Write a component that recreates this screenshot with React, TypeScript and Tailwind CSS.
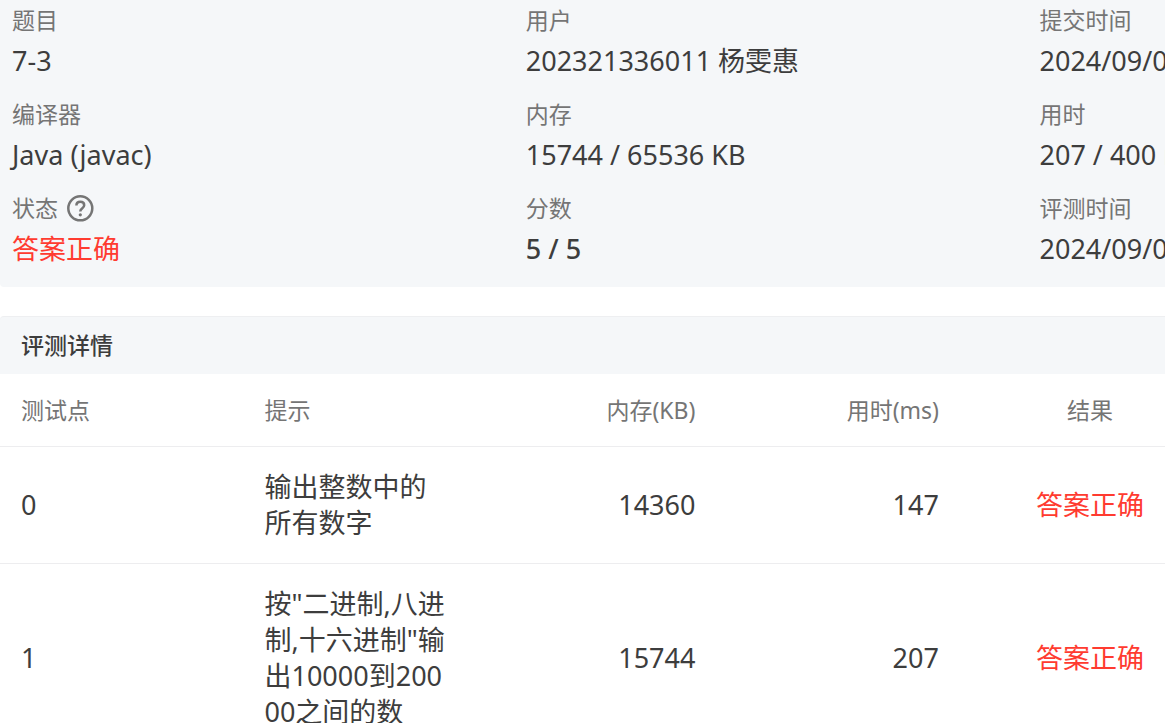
import type { ReactNode } from "react";

function HelpIcon() {
  return (
    <svg viewBox="0 0 28 28" className="size-7" fill="none" stroke="currentColor" strokeWidth="2.5" aria-hidden="true">
      <circle cx="14.3" cy="14.3" r="12" />
      <path d="M10.4 11.6C10.4 9.2 12 7.8 14.3 7.8s3.9 1.4 3.9 3.4c0 1.6-.9 2.3-2.1 3.2-1.2.9-1.8 1.5-1.8 3" />
      <circle cx="14.3" cy="20.8" r="1.6" fill="currentColor" stroke="none" />
    </svg>
  );
}

function Field({ label, help, children }: { label: string; help?: boolean; children: ReactNode }) {
  return (
    <div className="flex flex-col gap-[7px] pl-3 whitespace-nowrap">
      <dt className="flex h-8 items-center gap-2 text-[23px] leading-8 text-[#757575]">
        {label}
        {help && (
          <button type="button" aria-label="状态说明">
            <HelpIcon />
          </button>
        )}
      </dt>
      <dd className="text-[27px] leading-9">{children}</dd>
    </div>
  );
}

const tests = [
  { id: 0, hint: "输出整数中的所有数字", memory: 14360, time: 147 },
  { id: 1, hint: '按"二进制,八进制,十六进制"输出10000到20000之间的数', memory: 15744, time: 207 },
];

export default function App() {
  return (
    <main className="overflow-hidden bg-white font-['Noto_Sans','Noto_Sans_CJK_SC',sans-serif] text-[#3d3d3d]" lang="zh-CN">
      <dl className="grid grid-cols-[44.1%_44.1%_44.1%] gap-y-[19px] overflow-hidden rounded-bl-sm bg-[#f5f7f9] pt-1 pb-5">
        <Field label="题目">7-3</Field>
        <Field label="用户">202321336011 杨雯惠</Field>
        <Field label="提交时间">2024/09/0</Field>
        <Field label="编译器">Java (javac)</Field>
        <Field label="内存">15744 / 65536 KB</Field>
        <Field label="用时">207 / 400 ms</Field>
        <Field label="状态" help>
          <span className="text-[#ff3b30]">答案正确</span>
        </Field>
        <Field label="分数">
          <span className="font-medium">5 / 5</span>
        </Field>
        <Field label="评测时间">2024/09/0</Field>
      </dl>

      <section className="mt-[29px]">
        <h2 className="rounded-tl-sm border-t border-[#eeeff1] bg-[#f5f7f9] px-[21px] py-3 text-[23px] leading-[33px] font-medium">
          评测详情
        </h2>
        <table className="w-full table-fixed border-collapse text-[27px] leading-9">
          <colgroup>
            <col className="w-[20.9%]" />
            <col className="w-[19.7%]" />
            <col className="w-[20.9%]" />
            <col className="w-[20.9%]" />
            <col />
          </colgroup>
          <thead>
            <tr className="border-b border-[#ededef] text-[23px] text-[#757575] [&>th]:px-[21px] [&>th]:py-[18px] [&>th]:font-normal [&>th:last-child]:pl-[76px]">
              <th scope="col" className="text-left">测试点</th>
              <th scope="col" className="text-left">提示</th>
              <th scope="col" className="text-right">内存(KB)</th>
              <th scope="col" className="text-right">用时(ms)</th>
              <th scope="col" className="text-center">结果</th>
            </tr>
          </thead>
          <tbody>
            {tests.map((t) => (
              <tr key={t.id} className="border-b border-[#ededef] [&>td]:px-[21px] [&>td]:py-[22px] [&>td:last-child]:pl-[76px]">
                <td>{t.id}</td>
                <td className="break-all">{t.hint}</td>
                <td className="text-right">{t.memory}</td>
                <td className="text-right">{t.time}</td>
                <td className="text-center whitespace-nowrap text-[#ff3b30]">答案正确</td>
              </tr>
            ))}
          </tbody>
        </table>
      </section>
    </main>
  );
}
